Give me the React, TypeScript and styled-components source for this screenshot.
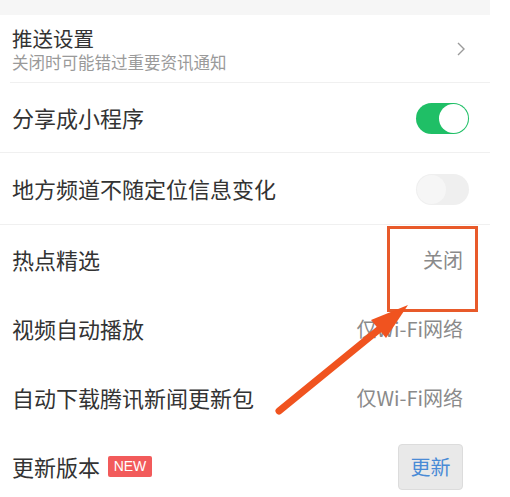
import React from "react";
import styled, { createGlobalStyle } from "styled-components";

const GlobalStyle = createGlobalStyle`
  body {
    margin: 0;
    background: #ffffff;
    font-family: "Noto Sans CJK SC", "Noto Sans", sans-serif;
  }
`;

const Page = styled.div`
  position: relative;
  width: 510px;
  height: 497px;
  overflow: hidden;
  background: #ffffff;
`;

const List = styled.div`
  width: 490px;
`;

const TopGap = styled.div`
  height: 15px;
  background: #f6f6f6;
`;

const Row = styled.div<{ $h: number; $line?: boolean; $inset?: number }>`
  position: relative;
  height: ${(p) => p.$h}px;
  display: flex;
  align-items: center;
  justify-content: space-between;
  padding: 0 21px 0 12px;
  box-sizing: border-box;

  &::after {
    content: "";
    display: ${(p) => (p.$line ? "block" : "none")};
    position: absolute;
    left: ${(p) => p.$inset || 0}px;
    right: 0;
    bottom: 0;
    height: 1px;
    background: #f0f0f0;
  }
`;

const Left = styled.div`
  display: flex;
  align-items: center;
  gap: 8px;
`;

const Stack = styled.div`
  display: flex;
  flex-direction: column;
  gap: 3px;
`;

const Title = styled.span<{ $size?: number }>`
  font-size: ${(p) => p.$size || 22}px;
  line-height: 1.15;
  color: #333333;
`;

const Sub = styled.span`
  font-size: 16.5px;
  line-height: 1.1;
  color: #9a9a9a;
`;

const Value = styled.span`
  font-size: 20px;
  color: #8a8a8a;
  margin-right: 6px;
`;

const Badge = styled.span`
  display: inline-flex;
  align-items: center;
  justify-content: center;
  width: 44px;
  height: 21px;
  border-radius: 2px;
  background: #f25b5b;
  color: #ffffff;
  font-family: "Liberation Sans", Arial, sans-serif;
  font-size: 14px;
`;

const Track = styled.div<{ $on: boolean }>`
  width: 53px;
  height: 31px;
  border-radius: 16px;
  background: ${(p) => (p.$on ? "#1fbf66" : "#efefef")};
  position: relative;
  box-sizing: border-box;
`;

const Knob = styled.div<{ $on: boolean }>`
  position: absolute;
  top: 1px;
  ${(p) => (p.$on ? "right: 1px;" : "left: 1px;")}
  width: 29px;
  height: 29px;
  border-radius: 50%;
  background: ${(p) => (p.$on ? "#ffffff" : "#f6f6f6")};
  box-sizing: border-box;
`;

const UpdateButton = styled.button`
  width: 65px;
  height: 46px;
  margin-right: 6px;
  border: 1px solid #dcdcdc;
  border-radius: 4px;
  background: #e9e9e9;
  color: #4a8bd6;
  font-family: "Noto Sans CJK SC", sans-serif;
  font-size: 20px;
  padding: 0;
`;

const Highlight = styled.div`
  position: absolute;
  left: 387px;
  top: 226px;
  width: 91px;
  height: 86px;
  border: 3px solid #e85a2a;
  box-sizing: border-box;
`;

const Overlay = styled.svg`
  position: absolute;
  left: 0;
  top: 0;
  pointer-events: none;
`;

function Toggle({ on }: { on: boolean }) {
  return (
    <Track $on={on}>
      <Knob $on={on} />
    </Track>
  );
}

function Chevron() {
  return (
    <svg width="10" height="16" viewBox="0 0 10 16" style={{ marginRight: 3 }}>
      <path d="M2 2 L8 8 L2 14" fill="none" stroke="#9a9a9a" strokeWidth="1.4" />
    </svg>
  );
}

export default function App() {
  return (
    <Page>
      <GlobalStyle />
      <List>
        <TopGap />
        <Row $h={68} $line $inset={10}>
          <Stack>
            <Title $size={20.5}>推送设置</Title>
            <Sub>关闭时可能错过重要资讯通知</Sub>
          </Stack>
          <Chevron />
        </Row>
        <Row $h={70} $line>
          <Title>分享成小程序</Title>
          <Toggle on />
        </Row>
        <Row $h={72} $line>
          <Title>地方频道不随定位信息变化</Title>
          <Toggle on={false} />
        </Row>
        <Row $h={69}>
          <Title>热点精选</Title>
          <Value>关闭</Value>
        </Row>
        <Row $h={69}>
          <Title>视频自动播放</Title>
          <Value>仅Wi-Fi网络</Value>
        </Row>
        <Row $h={69}>
          <Title>自动下载腾讯新闻更新包</Title>
          <Value>仅Wi-Fi网络</Value>
        </Row>
        <Row $h={69}>
          <Left>
            <Title>更新版本</Title>
            <Badge>NEW</Badge>
          </Left>
          <UpdateButton>更新</UpdateButton>
        </Row>
      </List>

      <Highlight />
      <Overlay width="510" height="497" viewBox="0 0 510 497">
        <line x1="279" y1="411" x2="382" y2="327" stroke="#f0531f" strokeWidth="7" strokeLinecap="round" />
        <polygon points="408,305 371,320 386,338" fill="#f0531f" />
      </Overlay>
    </Page>
  );
}
